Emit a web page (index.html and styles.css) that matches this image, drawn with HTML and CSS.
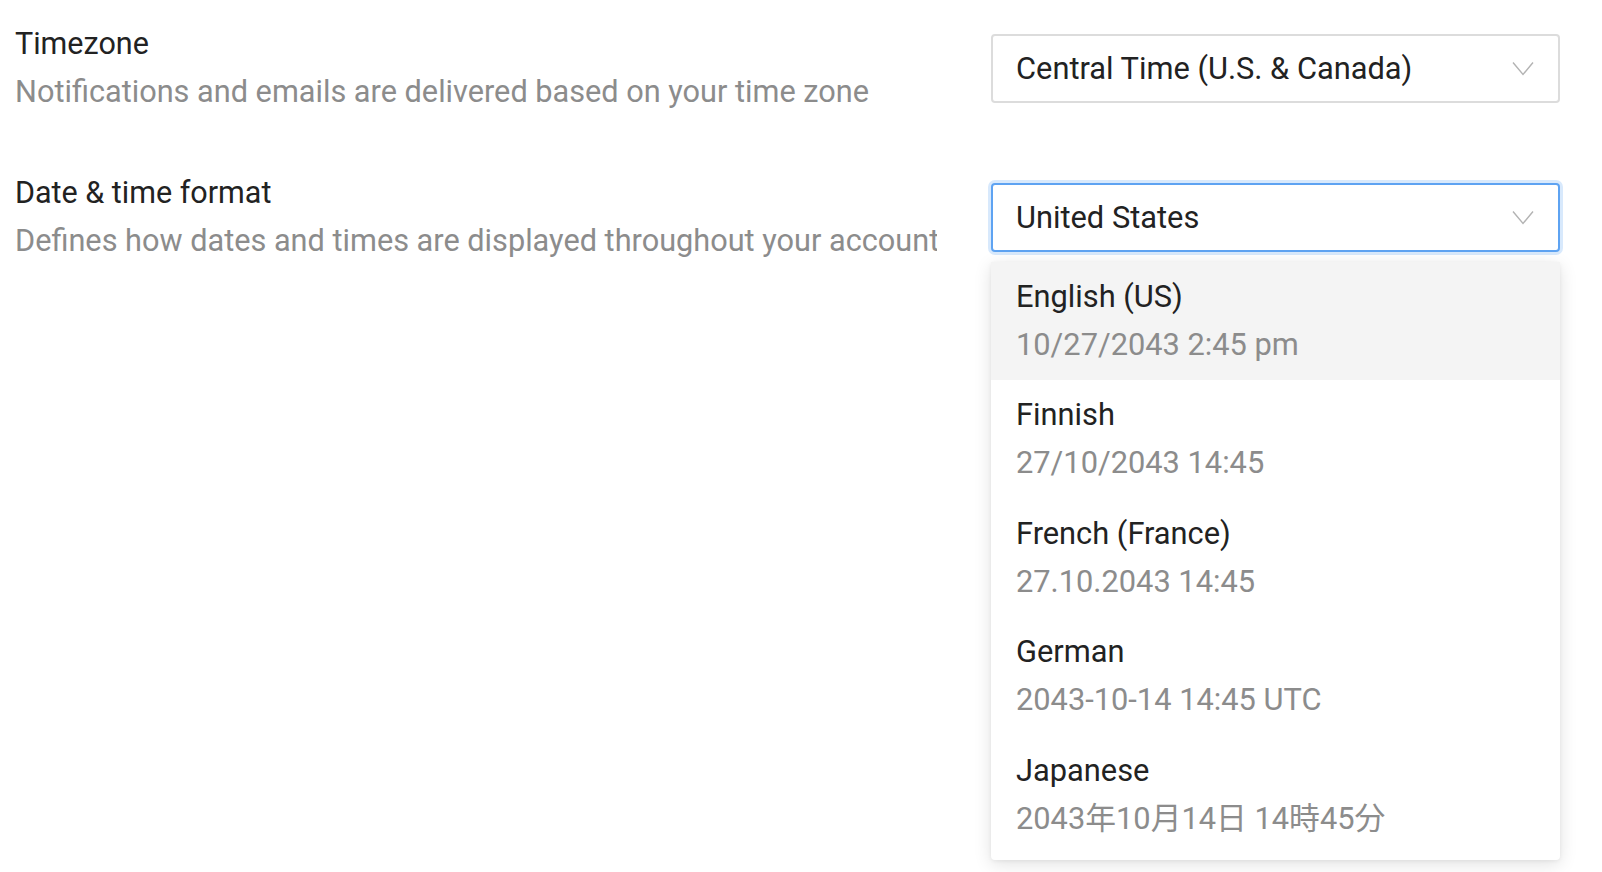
FILE: index.html
```html
<!DOCTYPE html>
<html lang="en">
<head>
<meta charset="utf-8">
<title>Settings</title>
<link rel="stylesheet" href="styles.css">
</head>
<body>
<div class="settings">
  <div class="row">
    <div class="info">
      <div class="title">Timezone</div>
      <div class="desc">Notifications and emails are delivered based on your time zone</div>
    </div>
    <div class="control">
      <div class="select">
        <span class="value">Central Time (U.S. &amp; Canada)</span>
        <svg class="chev" width="22" height="15" viewBox="0 0 22 15"><polyline points="1,1.5 11,13.5 21,1.5" fill="none" stroke="#b3b3b3" stroke-width="1.4"/></svg>
      </div>
    </div>
  </div>
  <div class="row">
    <div class="info">
      <div class="title">Date &amp; time format</div>
      <div class="desc">Defines how dates and times are displayed throughout your account</div>
    </div>
    <div class="control">
      <div class="select focused">
        <span class="value">United States</span>
        <svg class="chev" width="22" height="15" viewBox="0 0 22 15"><polyline points="1,1.5 11,13.5 21,1.5" fill="none" stroke="#b3b3b3" stroke-width="1.4"/></svg>
      </div>
      <div class="dropdown">
        <div class="option active"><div class="name">English (US)</div><div class="sample">10/27/2043 2:45 pm</div></div>
        <div class="option"><div class="name">Finnish</div><div class="sample">27/10/2043 14:45</div></div>
        <div class="option"><div class="name">French (France)</div><div class="sample">27.10.2043 14:45</div></div>
        <div class="option"><div class="name">German</div><div class="sample">2043-10-14 14:45 UTC</div></div>
        <div class="option"><div class="name">Japanese</div><div class="sample">2043年10月14日 14時45分</div></div>
      </div>
    </div>
  </div>
</div>
</body>
</html>
```
FILE: styles.css
```css
html, body {
  margin: 0;
  padding: 0;
  background: #ffffff;
}
html {
  height: 100%;
}
body {
  min-height: 100%;
  font-family: Roboto, "Noto Sans CJK JP", sans-serif;
  color: #222222;
}
.settings {
  padding: 20px 42px 0 15px;
  display: flex;
  flex-direction: column;
  gap: 53px;
}
.row {
  display: flex;
  align-items: center;
  gap: 52px;
}
.info {
  width: 922px;
  flex: 0 0 922px;
  overflow: hidden;
  white-space: nowrap;
  margin-right: 2px;
}
.title {
  font-size: 30.5px;
  line-height: 48px;
  color: #222222;
}
.desc {
  font-size: 30.7px;
  line-height: 48px;
  color: #8c8c8c;
}
.control {
  flex: 1;
  position: relative;
}
.select {
  height: 69px;
  box-sizing: border-box;
  border: 2px solid #dcdcdc;
  border-radius: 4px;
  display: flex;
  align-items: center;
  justify-content: space-between;
  padding: 0 24px 0 23px;
  font-size: 30.8px;
  color: #222222;
  background: #fff;
}
.select.focused {
  border-color: #5ea3f2;
  box-shadow: 0 0 0 3px #d8e9fc;
}
.chev {
  display: block;
}
.dropdown {
  position: absolute;
  top: 79px;
  left: 0;
  right: 0;
  padding: 0 0 6px 0;
  background: #fff;
  border-radius: 4px;
  box-shadow: 0 4px 18px rgba(0, 0, 0, 0.12), 0 1px 4px rgba(0, 0, 0, 0.06);
  z-index: 5;
}
.option {
  padding: 11px 25px;
  height: 118.5px;
  box-sizing: border-box;
  font-size: 30.8px;
  line-height: 48px;
  white-space: nowrap;
}
.option.active {
  background: #f4f4f4;
}
.name {
  color: #222222;
}
.sample {
  color: #8c8c8c;
}
```
